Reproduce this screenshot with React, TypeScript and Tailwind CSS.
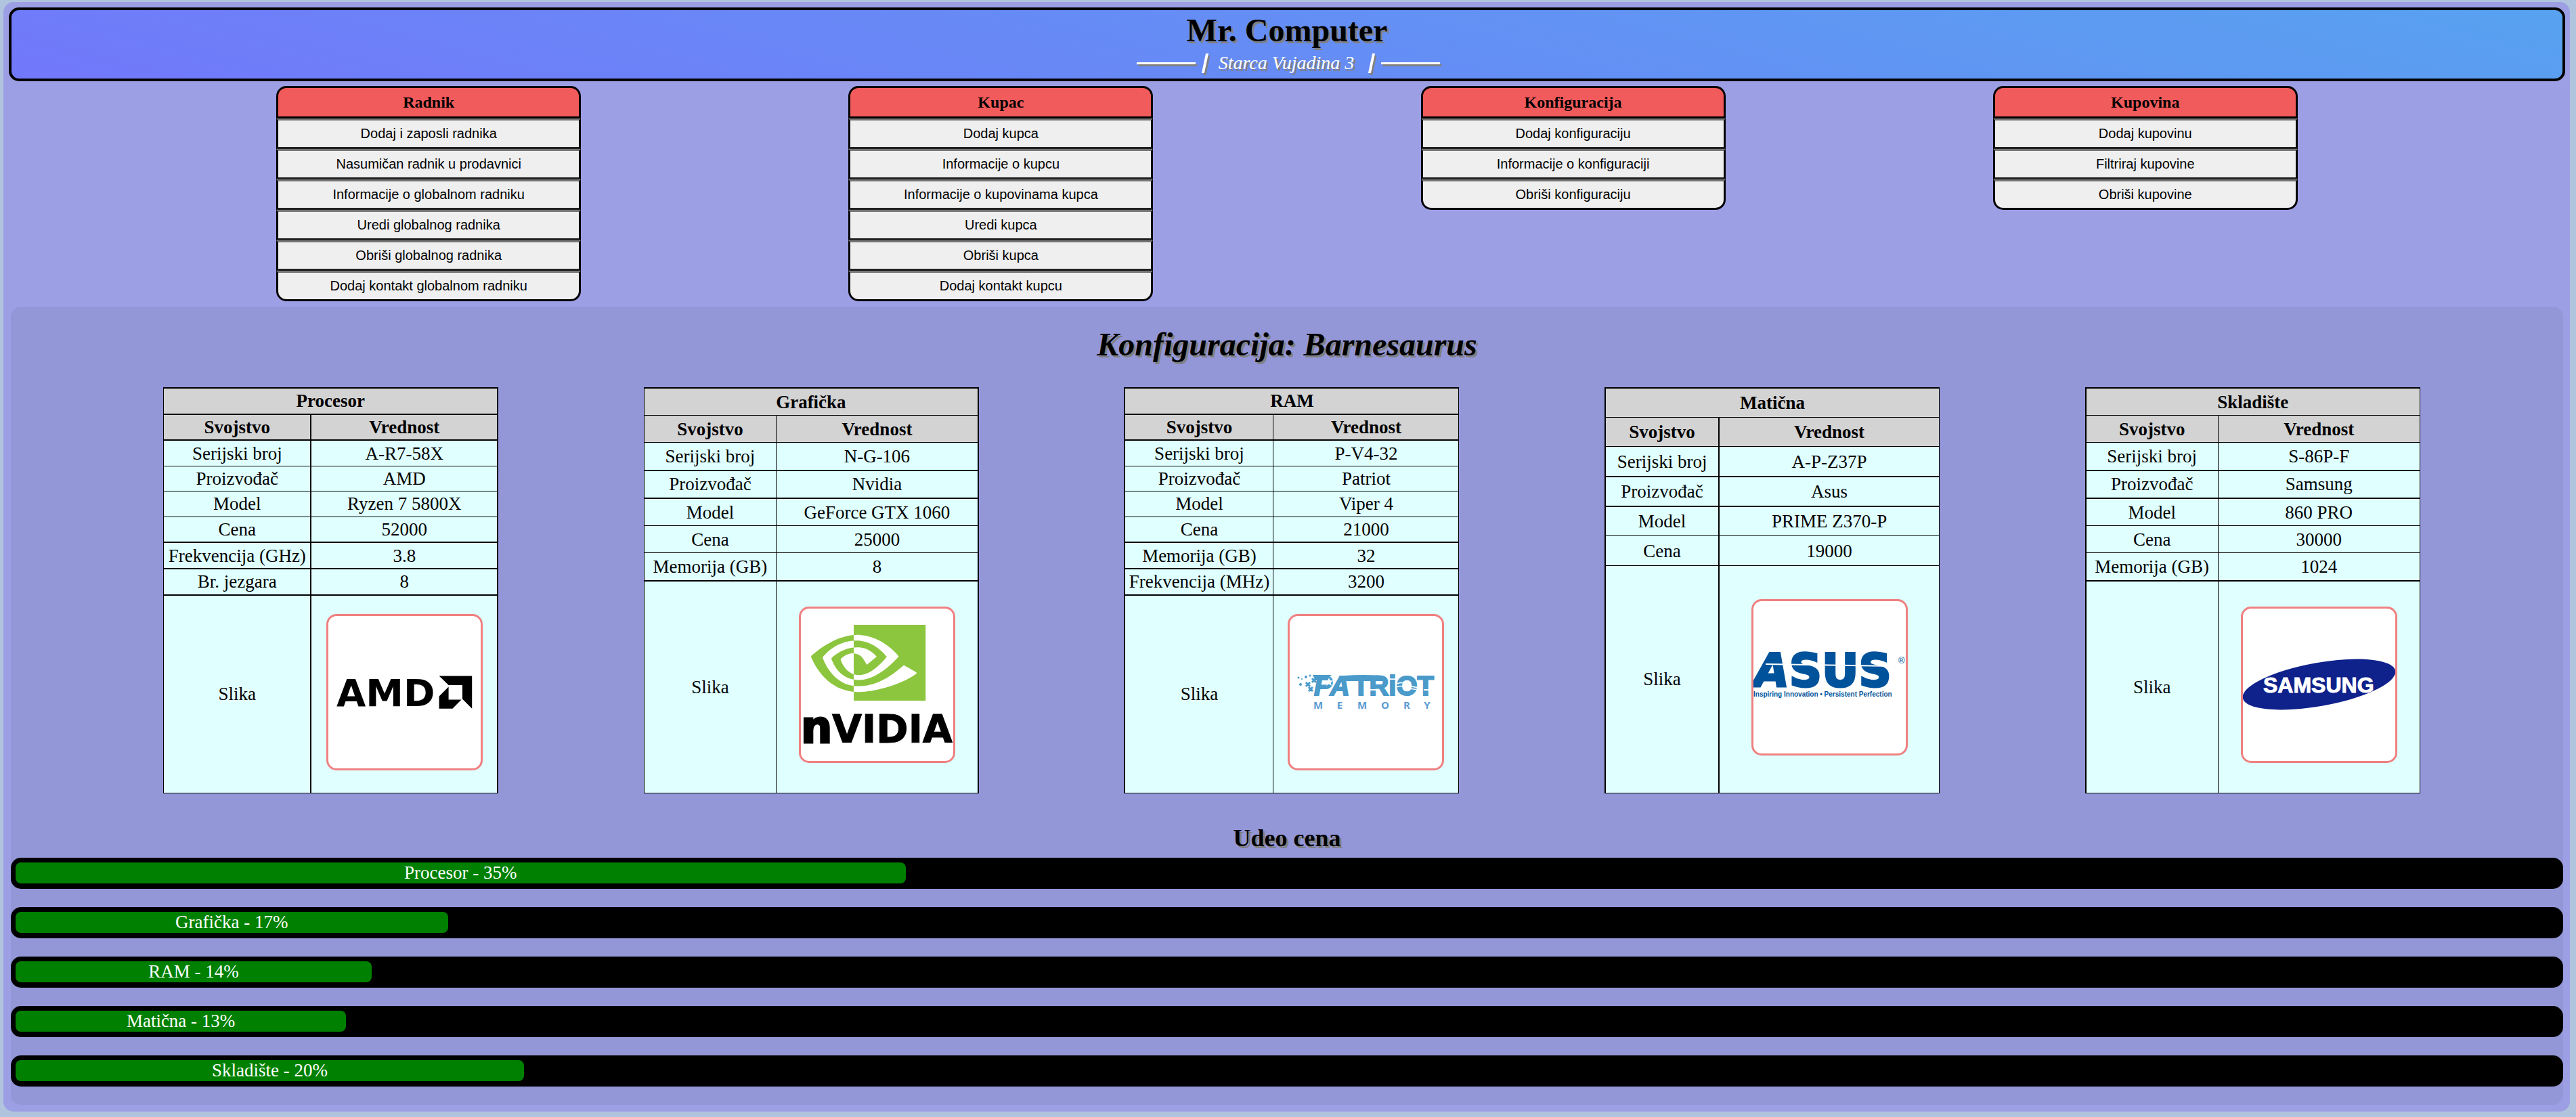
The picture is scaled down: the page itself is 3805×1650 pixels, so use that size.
import type { ReactNode } from 'react';

type Menu = { title: string; actions: string[] };

const menus: Menu[] = [
  {
    title: 'Radnik',
    actions: [
      'Dodaj i zaposli radnika',
      'Nasumičan radnik u prodavnici',
      'Informacije o globalnom radniku',
      'Uredi globalnog radnika',
      'Obriši globalnog radnika',
      'Dodaj kontakt globalnom radniku',
    ],
  },
  {
    title: 'Kupac',
    actions: [
      'Dodaj kupca',
      'Informacije o kupcu',
      'Informacije o kupovinama kupca',
      'Uredi kupca',
      'Obriši kupca',
      'Dodaj kontakt kupcu',
    ],
  },
  {
    title: 'Konfiguracija',
    actions: ['Dodaj konfiguraciju', 'Informacije o konfiguraciji', 'Obriši konfiguraciju'],
  },
  {
    title: 'Kupovina',
    actions: ['Dodaj kupovinu', 'Filtriraj kupovine', 'Obriši kupovine'],
  },
];

function AmdLogo() {
  return (
    <svg viewBox="0 0 225 225" className="h-full w-full" role="img" aria-label="AMD">
      <text x="12" y="133" fontFamily="DejaVu Sans, sans-serif" fontWeight="700" fontSize="56">
        AMD
      </text>
      <path d="M163.6 88.6H212.2V136.8L198 122.6V102H177.6Z" />
      <path d="M177.6 104.5V123.4H196.5L183.4 136.8H163.6V118.6Z" />
    </svg>
  );
}

function NvidiaLogo() {
  return (
    <svg viewBox="0 0 225 225" className="h-full w-full" role="img" aria-label="Nvidia">
      <path
        transform="translate(14.8 -4.7) scale(7.06)"
        fill="#8cc63f"
        d="M8.948 8.798v-1.43a6.7 6.7 0 0 1 .424-.018c3.922-.124 6.493 3.374 6.493 3.374s-2.774 3.851-5.75 3.851c-.398 0-.787-.062-1.158-.185v-4.346c1.528.185 1.837.857 2.747 2.385l2.04-1.714s-1.492-1.952-4-1.952a6.016 6.016 0 0 0-.796.035m0-4.735v2.138l.424-.027c5.45-.185 9.01 4.47 9.01 4.47s-4.08 4.964-8.33 4.964c-.37 0-.733-.035-1.095-.097v1.325c.3.035.61.062.91.062 3.957 0 6.82-2.023 9.593-4.408.459.371 2.34 1.263 2.73 1.652-2.633 2.208-8.772 3.984-12.253 3.984-.335 0-.653-.018-.971-.053v1.864H24V4.063zm0 10.326v1.131c-3.657-.654-4.673-4.46-4.673-4.46s1.758-1.944 4.673-2.262v1.237H8.94c-1.528-.186-2.73 1.245-2.73 1.245s.68 2.412 2.739 3.11M2.456 10.9s2.164-3.197 6.5-3.533V6.201C4.153 6.59 0 10.653 0 10.653s2.35 6.802 8.948 7.42v-1.237c-4.84-.6-6.492-5.936-6.492-5.936z"
      />
      <g fontFamily="DejaVu Sans, sans-serif" fontWeight="700" stroke="#000">
        <text x="0" y="198" fontSize="65" strokeWidth="3">
          n
        </text>
        <text x="46" y="198" fontSize="57" strokeWidth="1">
          VIDIA
        </text>
      </g>
    </svg>
  );
}

function PatriotLogo() {
  return (
    <svg viewBox="0 0 225 225" className="h-full w-full" role="img" aria-label="Patriot Memory">
      <g fill="#4a9aca">
        <g
          fontFamily="Liberation Sans, Arial, sans-serif"
          fontWeight="700"
          fontSize="40"
          stroke="#4a9aca"
          strokeWidth="2"
        >
          <text x="36" y="117" fontStyle="italic">
            PA
          </text>
          <text x="93" y="117">
            TRiOT
          </text>
        </g>
        <path d="M80 88Q110 86 138 88L142 96H74Z" />
        <path d="M34 87H62L52 95H38Z" />
        <g stroke="#4a9aca" strokeWidth="3">
          <path d="M24 98l6 6M30 98l-6 6M28 105l6 6M34 105l-6 6M33 92l6 6M39 92l-6 6" />
        </g>
        <circle cx="13" cy="91" r="1.5" />
        <circle cx="24" cy="90" r="2" />
        <circle cx="18" cy="93" r="1" />
        <circle cx="16" cy="101" r="2" />
        <circle cx="30" cy="88" r="1.5" />
        <g
          fill="#5a9bd3"
          fontFamily="Open Sans, sans-serif"
          fontWeight="700"
          fontSize="15"
          textAnchor="middle"
        >
          <text x="42" y="137">M</text>
          <text x="74" y="137">E</text>
          <text x="107" y="137">M</text>
          <text x="141" y="137">O</text>
          <text x="173" y="137">R</text>
          <text x="203" y="137">Y</text>
        </g>
      </g>
      <path
        fill="#fff"
        d="M58 91l1.600 4 5 .4-4 3 1.400 4.600-4-2.600-4 2.600 1.400-4.600-4-3 5-.4z"
      />
      <path
        d="M158 100C170 94 176 107 190 105M158 105C168 100 176 110 188 108"
        fill="none"
        stroke="#fff"
        strokeWidth="1.500"
      />
      <path d="M116 109h12M198 109h14" stroke="#fff" strokeWidth="2" />
    </svg>
  );
}

function AsusLogo() {
  return (
    <svg viewBox="0 0 225 225" className="h-full w-full" role="img" aria-label="Asus">
      <g fill="#00539b">
        <text
          x="1"
          y="126"
          fontFamily="DejaVu Sans, sans-serif"
          fontWeight="700"
          fontSize="67"
          stroke="#00539b"
          strokeWidth="3"
        >
          <tspan fontStyle="italic">A</tspan>SUS
        </text>
        <text
          x="0"
          y="141"
          fontFamily="Liberation Sans, Arial, sans-serif"
          fontWeight="700"
          fontSize="10"
        >
          Inspiring Innovation • Persistent Perfection
        </text>
        <text x="214" y="92" fontFamily="Liberation Sans, Arial, sans-serif" fontSize="13">
          ®
        </text>
      </g>
      <path d="M18 93L212 96" stroke="#fff" strokeWidth="2" />
    </svg>
  );
}

function SamsungLogo() {
  return (
    <svg viewBox="0 0 225 225" className="h-full w-full" role="img" aria-label="Samsung">
      <ellipse
        cx="112.500"
        cy="112"
        rx="114.500"
        ry="32"
        transform="rotate(-10.150 112.500 112)"
        fill="#0f218b"
      />
      <text
        x="30"
        y="124"
        fill="#fff"
        fontFamily="Liberation Sans, Arial, sans-serif"
        fontWeight="700"
        fontSize="32"
        stroke="#fff"
      >
        SAMSUNG
      </text>
    </svg>
  );
}

/* `rule` is the thickness of the line under a row; the two entries of
   `headRules` belong to the caption row and the column heading row. */
type Part = {
  title: string;
  frame: string;
  labelWidth: string;
  divider: string;
  headRules: [1 | 2, 1 | 2];
  rows: { label: string; value: string; rule: 1 | 2 }[];
  logo: ReactNode;
};

const rules = { 1: 'border-b', 2: 'border-b-2' };

const parts: Part[] = [
  {
    title: 'Procesor',
    frame: 'border-l border-r-2',
    labelWidth: 'w-[218px]',
    divider: 'border-r-2',
    headRules: [2, 2],
    rows: [
      { label: 'Serijski broj', value: 'A-R7-58X', rule: 1 },
      { label: 'Proizvođač', value: 'AMD', rule: 1 },
      { label: 'Model', value: 'Ryzen 7 5800X', rule: 1 },
      { label: 'Cena', value: '52000', rule: 2 },
      { label: 'Frekvencija (GHz)', value: '3.8', rule: 2 },
      { label: 'Br. jezgara', value: '8', rule: 2 },
    ],
    logo: <AmdLogo />,
  },
  {
    title: 'Grafička',
    frame: 'border-l border-r-2',
    labelWidth: 'w-[195px]',
    divider: 'border-r',
    headRules: [1, 1],
    rows: [
      { label: 'Serijski broj', value: 'N-G-106', rule: 2 },
      { label: 'Proizvođač', value: 'Nvidia', rule: 2 },
      { label: 'Model', value: 'GeForce GTX 1060', rule: 1 },
      { label: 'Cena', value: '25000', rule: 1 },
      { label: 'Memorija (GB)', value: '8', rule: 2 },
    ],
    logo: <NvidiaLogo />,
  },
  {
    title: 'RAM',
    frame: 'border-l-2 border-r',
    labelWidth: 'w-[219px]',
    divider: 'border-r',
    headRules: [2, 2],
    rows: [
      { label: 'Serijski broj', value: 'P-V4-32', rule: 1 },
      { label: 'Proizvođač', value: 'Patriot', rule: 1 },
      { label: 'Model', value: 'Viper 4', rule: 1 },
      { label: 'Cena', value: '21000', rule: 2 },
      { label: 'Memorija (GB)', value: '32', rule: 2 },
      { label: 'Frekvencija (MHz)', value: '3200', rule: 2 },
    ],
    logo: <PatriotLogo />,
  },
  {
    title: 'Matična',
    frame: 'border-l-2 border-r',
    labelWidth: 'w-[168px]',
    divider: 'border-r-2',
    headRules: [1, 1],
    rows: [
      { label: 'Serijski broj', value: 'A-P-Z37P', rule: 2 },
      { label: 'Proizvođač', value: 'Asus', rule: 2 },
      { label: 'Model', value: 'PRIME Z370-P', rule: 1 },
      { label: 'Cena', value: '19000', rule: 1 },
    ],
    logo: <AsusLogo />,
  },
  {
    title: 'Skladište',
    frame: 'border-l-2 border-r',
    labelWidth: 'w-[195px]',
    divider: 'border-r',
    headRules: [1, 1],
    rows: [
      { label: 'Serijski broj', value: 'S-86P-F', rule: 2 },
      { label: 'Proizvođač', value: 'Samsung', rule: 2 },
      { label: 'Model', value: '860 PRO', rule: 1 },
      { label: 'Cena', value: '30000', rule: 1 },
      { label: 'Memorija (GB)', value: '1024', rule: 2 },
    ],
    logo: <SamsungLogo />,
  },
];

const shares = [
  { name: 'Procesor', percent: 35 },
  { name: 'Grafička', percent: 17 },
  { name: 'RAM', percent: 14 },
  { name: 'Matična', percent: 13 },
  { name: 'Skladište', percent: 20 },
];

function MenuCard({ title, actions }: Menu) {
  return (
    <nav aria-label={title} className="flex w-[450px] flex-col">
      <h2 className="rounded-t-[15px] border-[3px] border-black bg-[#f15b5b] text-center text-[24px] leading-[42px] font-bold">
        {title}
      </h2>
      {actions.map((action) => (
        <button
          key={action}
          type="button"
          className="border-x-[3px] border-y-[3px] border-x-black border-t-[#767676] border-b-[#212121] bg-[#efefef] text-center font-['Liberation_Sans',Arial,sans-serif] text-[20px] leading-[39px] last:rounded-b-[15px] last:border-b-black"
        >
          {action}
        </button>
      ))}
    </nav>
  );
}

function PartTable({ title, frame, labelWidth, divider, headRules, rows, logo }: Part) {
  return (
    <table
      className={`h-[600px] w-[495px] table-fixed border-separate border-spacing-0 border-t-2 border-b border-black bg-[#e0ffff] text-center text-[27px] leading-[30px] whitespace-nowrap ${frame}`}
    >
      <colgroup>
        <col className={labelWidth} />
        <col />
      </colgroup>
      <tbody>
        <tr className="bg-[#d3d3d3]">
          <th colSpan={2} scope="colgroup" className={`border-black p-0 ${rules[headRules[0]]}`}>
            {title}
          </th>
        </tr>
        <tr className="bg-[#d3d3d3]">
          <th scope="col" className={`border-black p-0 ${divider} ${rules[headRules[1]]}`}>
            Svojstvo
          </th>
          <th scope="col" className={`border-black p-0 ${rules[headRules[1]]}`}>
            Vrednost
          </th>
        </tr>
        {rows.map((row) => (
          <tr key={row.label}>
            <td className={`border-black p-0 ${divider} ${rules[row.rule]}`}>{row.label}</td>
            <td className={`border-black p-0 ${rules[row.rule]}`}>{row.value}</td>
          </tr>
        ))}
        <tr>
          <td className={`border-black p-0 ${divider}`}>Slika</td>
          <td className="pt-0.5 pb-2">
            <div className="mx-auto size-[231px] overflow-hidden rounded-[15px] border-[3px] border-[#f08080] bg-white">
              {logo}
            </div>
          </td>
        </tr>
      </tbody>
    </table>
  );
}

function Dash() {
  return (
    <span
      aria-hidden="true"
      className="h-[3px] w-[87px] -skew-x-12 bg-white shadow-[3px_3px_0_#808080]"
    />
  );
}

function Bar() {
  return (
    <span
      aria-hidden="true"
      className="h-[29px] w-[4px] -skew-x-12 bg-white shadow-[3px_3px_0_#808080]"
    />
  );
}

export default function App() {
  return (
    <div className="min-h-screen bg-[#b0c4de] pt-[3px] pr-[9px] pb-2 pl-[5px] font-['Liberation_Serif','Times_New_Roman',serif] text-black">
      <div className="rounded-[15px] bg-[#9d9fe5] pt-2 pr-[7px] pb-2.5 pl-2">
        <header className="flex flex-col items-center rounded-[15px] border-4 border-black bg-[linear-gradient(15deg,#7278fa,#58a2f0)] pt-0.5 pb-[7px]">
          <h1 className="text-[48px] leading-[56px] font-bold [text-shadow:3px_3px_0_#808080]">
            Mr. Computer
          </h1>
          <p className="mt-1 flex h-8 items-center gap-3 pl-1 text-[28px] leading-8 text-white italic [text-shadow:3px_3px_0_#808080]">
            <Dash />
            <Bar />
            <span className="mr-3 ml-1.5">Starca Vujadina 3</span>
            <Bar />
            <Dash />
          </p>
        </header>

        <div className="flex flex-wrap items-start justify-evenly pt-[7px] pb-2">
          {menus.map((menu) => (
            <MenuCard key={menu.title} {...menu} />
          ))}
        </div>

        <main className="mx-[3px] flex flex-col rounded-[15px] bg-[#9397d8] pt-7 pb-[27px]">
          <h2 className="text-center text-[48px] leading-[56px] font-bold italic [text-shadow:3px_3px_0_#808080]">
            Konfiguracija: Barnesaurus
          </h2>
          <div className="mt-[35px] flex flex-wrap justify-around pr-[104px] pl-[118px]">
            {parts.map((part) => (
              <PartTable key={part.title} {...part} />
            ))}
          </div>

          <h3 className="mt-[46px] text-center text-[36px] leading-10 font-bold [text-shadow:3px_3px_0_#808080]">
            Udeo cena
          </h3>
          <div className="mt-[9px] flex flex-col gap-[27px]">
            {shares.map(({ name, percent }) => (
              <div key={name} className="rounded-[15px] bg-black px-[7px] pt-[7px] pb-2">
                <div
                  role="progressbar"
                  aria-label={name}
                  aria-valuenow={percent}
                  aria-valuemin={0}
                  aria-valuemax={100}
                  className="rounded-[8px] bg-[#008000] text-center text-[27px] leading-[31px] text-white"
                  style={{ width: `${percent}%` }}
                >
                  {name} - {percent}%
                </div>
              </div>
            ))}
          </div>
        </main>
      </div>
    </div>
  );
}
